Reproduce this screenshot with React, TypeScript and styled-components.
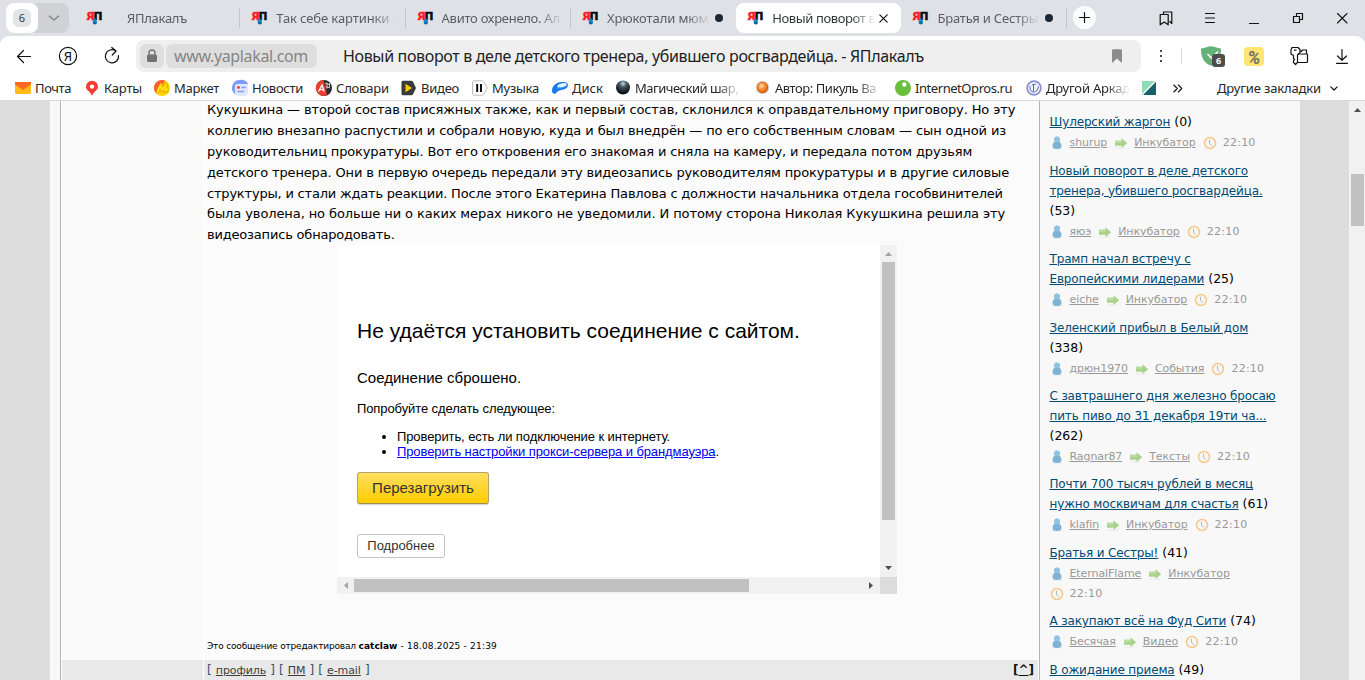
import React from "react";
import styled, { createGlobalStyle, css } from "styled-components";

const UI = `"Noto Sans", "Open Sans", sans-serif`;
const FORUM = `"DejaVu Sans", Verdana, sans-serif`;
const PAGE = `"Liberation Sans", Arial, sans-serif`;

const Global = createGlobalStyle`
  * { box-sizing: border-box; }
  body { margin: 0; background: #dfe1e6; overflow: hidden; }
  svg { display: block; flex: none; overflow: visible; }
`;

const Browser = styled.div`
  width: 1365px;
  height: 680px;
  display: flex;
  flex-direction: column;
  overflow: hidden;
`;

const fade = css`
  mask-image: linear-gradient(to right, #000 calc(100% - 24px), transparent);
`;

/* ---------- tab strip ---------- */

const TabStrip = styled.div`
  flex: none;
  height: 36px;
  display: flex;
  align-items: flex-start;
  padding: 3px 0 0 6px;
  font-family: ${UI};
`;

const TabCounter = styled.div`
  width: 63px;
  height: 30px;
  margin-right: 6px;
  display: flex;
  background: #d0d2d6;
  border-radius: 8px;
`;

const CountBox = styled.div`
  width: 32px;
  height: 30px;
  display: grid;
  place-items: center;
  background: #fff;
  border-radius: 8px;
`;

const CountBadge = styled.span`
  width: 18px;
  height: 18px;
  border-radius: 6px;
  background: #e2e4e8;
  color: #33373d;
  font-size: 11px;
  line-height: 17px;
  text-align: center;
`;

const CountArrow = styled.div`
  flex: 1;
  display: grid;
  place-items: center;
`;

const Tab = styled.div<{ $active?: boolean; $line?: boolean }>`
  flex: none;
  width: 165.3px;
  height: 30px;
  display: flex;
  align-items: center;
  padding-left: 12px;
  border-radius: 8px;
  background: ${(p) => (p.$active ? "#fff" : "transparent")};
  color: ${(p) => (p.$active ? "#33373c" : "#5a5d62")};
  &::after {
    content: "";
    width: 1px;
    height: 20px;
    margin-left: auto;
    background: ${(p) => (p.$line ? "#c4c6ca" : "transparent")};
  }
`;

const TabTitle = styled.span<{ $centered?: boolean; $clip?: number; $track?: number }>`
  margin-left: ${(p) => (p.$centered ? 24 : 8)}px;
  width: ${(p) => p.$clip ?? 119}px;
  overflow: hidden;
  white-space: nowrap;
  font-size: 13px;
  line-height: 20px;
  letter-spacing: ${(p) => p.$track ?? -0.28}px;
  ${fade}
`;

const UnreadDot = styled.span`
  width: 8px;
  height: 8px;
  margin-left: 5px;
  border-radius: 50%;
  background: #1d2733;
`;

const CloseSlot = styled.span`
  margin-left: 4px;
`;

const NewTab = styled.div`
  width: 23px;
  height: 23px;
  margin: 3px 0 0 6px;
  display: grid;
  place-items: center;
  border-radius: 50%;
  background: #fbfcfd;
`;

const WindowButtons = styled.div`
  flex: 1;
  height: 30px;
  display: flex;
  align-items: center;
  justify-content: flex-end;
  gap: 28px;
  padding-right: 15px;
`;

/* ---------- toolbar ---------- */

const Toolbar = styled.div`
  flex: none;
  height: 40px;
  display: flex;
  align-items: center;
  padding: 0 14px;
  background: #fff;
  border-radius: 9px 9px 0 0;
  font-family: ${UI};
`;

const NavButtons = styled.div`
  width: 122px;
  display: flex;
  align-items: center;
  gap: 24px;
`;

const AddressBar = styled.div`
  width: 1005px;
  height: 32px;
  display: flex;
  align-items: center;
  padding: 0 17px 0 4px;
  border-radius: 8px;
  background: #efefef;
`;

const LockBox = styled.div`
  width: 24px;
  height: 24px;
  margin-right: 2px;
  display: grid;
  place-items: center;
  background: #dedede;
  border-radius: 6px;
`;

const Host = styled.div`
  width: 151px;
  height: 24px;
  padding-left: 8px;
  background: #dedede;
  border-radius: 6px;
  color: #858585;
  font-size: 16px;
  line-height: 24px;
  letter-spacing: -0.36px;
`;

const PageTitle = styled.div`
  flex: 1;
  margin-left: 26px;
  color: #222;
  font-size: 16px;
  line-height: 24px;
  letter-spacing: -0.35px;
  white-space: nowrap;
`;

const ToolIcons = styled.div`
  display: flex;
  align-items: center;
  padding-left: 18px;
`;

const Divider = styled.span`
  width: 1px;
  height: 16px;
  margin: 0 19px 0 18px;
  background: #dcdcdc;
`;

const Badge = styled.span`
  position: absolute;
  right: -4px;
  bottom: -1px;
  width: 13px;
  height: 13px;
  border-radius: 3px;
  background: #4d4d4d;
  color: #fff;
  font-size: 9px;
  font-weight: 700;
  line-height: 13px;
  text-align: center;
`;

const ShieldWrap = styled.span`
  position: relative;
`;

const Coupon = styled.span`
  width: 20px;
  height: 19px;
  margin: 0 25px 0 23px;
  border-radius: 4px;
  background: #ffe571;
  color: #74706a;
  font: italic 700 18px/21px Roboto, sans-serif;
  text-align: center;
`;

const DownloadSlot = styled.span`
  margin-left: 25px;
`;

/* ---------- bookmarks ---------- */

const Bookmarks = styled.div`
  flex: none;
  height: 25px;
  display: flex;
  align-items: center;
  padding-left: 15px;
  background: #fff;
  border-bottom: 1px solid #d9d9d9;
  font-family: ${UI};
  font-size: 13px;
  line-height: 20px;
  color: #262626;
`;

const Bookmark = styled.div<{ $w: number }>`
  flex: none;
  width: ${(p) => p.$w}px;
  display: flex;
  align-items: center;
  gap: 4px;
`;

const BookmarkName = styled.span<{ $track: number; $fade?: boolean }>`
  width: ${(p) => (p.$fade ? "106px" : "auto")};
  overflow: hidden;
  white-space: nowrap;
  letter-spacing: ${(p) => p.$track}px;
  ${(p) => p.$fade && fade}
`;

const ShortName = styled(BookmarkName)`
  width: 84px;
`;

const OtherBookmarks = styled.div`
  display: flex;
  align-items: center;
  gap: 9px;
  margin-left: 34px;
  letter-spacing: -0.14px;
`;

/* ---------- page ---------- */

const Viewport = styled.div`
  flex: 1;
  min-height: 0;
  display: flex;
  padding-left: 50px;
  background: #dddddd;
`;

const Gutter = styled.div`
  width: 10px;
  background: #f8f8f8;
`;

const Topic = styled.div`
  width: 980px;
  display: grid;
  grid-template-columns: 141px 834px;
  grid-template-rows: 558px 1fr;
  gap: 1px;
  background: #fff;
  border: solid #b3b3b3;
  border-width: 0 1px;
  padding-left: 1px;
  overflow: hidden;
`;

const AuthorCell = styled.div`
  background: #fafafa;
`;

const PostCell = styled.div`
  display: flex;
  flex-direction: column;
  padding-left: 3px;
  background: #fbfbfb;
  font-family: ${FORUM};
  color: #000;
`;

const PostText = styled.div`
  height: 144.6px;
  margin-top: -0.6px;
  font-size: 13px;
  line-height: 20.8px;
`;

const PostLine = styled.div<{ $track: number }>`
  white-space: nowrap;
  letter-spacing: ${(p) => p.$track}px;
`;

const EditNote = styled.div`
  margin-top: 44px;
  font-size: 9px;
  line-height: 16px;
  letter-spacing: -0.17px;
  white-space: pre;
  b {
    letter-spacing: 0.05px;
  }
`;

const EditDate = styled.span`
  letter-spacing: 0.2px;
`;

const FooterCell = styled.div`
  display: flex;
  justify-content: space-between;
  background: #e9e9e9;
  padding: 0 4px 0 3px;
  font: 12px/21px ${FORUM};
  color: #37526b;
  white-space: pre;
`;

const FooterLinks = styled.span`
  word-spacing: 0.3px;
  a {
    color: #3c3c3c;
    font-size: 11px;
    text-decoration: underline;
    letter-spacing: -0.1px;
  }
`;

const ToTop = styled.b`
  color: #111;
`;

/* ---------- embedded frame ---------- */

const Frame = styled.div`
  width: 560px;
  height: 349px;
  margin-left: 130px;
  display: grid;
  grid-template-columns: 543px 17px;
  grid-template-rows: 332px 17px;
  background: #fff;
  font-family: ${PAGE};
`;

const ErrorPage = styled.div`
  padding: 73px 0 0 20px;
  overflow: hidden;
  font-size: 13px;
  line-height: 15px;
  letter-spacing: -0.1px;
`;

const ErrorTitle = styled.h1`
  margin: 0 0 25px;
  font-size: 21px;
  font-weight: 400;
  line-height: 26px;
  letter-spacing: 0;
`;

const ErrorReason = styled.p`
  margin: 0 0 14px;
  font-size: 15px;
  line-height: 18px;
  letter-spacing: 0;
`;

const ErrorHint = styled.p`
  margin: 0 0 13px;
`;

const Tips = styled.ul`
  margin: 0 0 13px;
  padding-left: 40px;
  a {
    color: #0000ee;
    text-decoration: underline;
  }
`;

const ReloadButton = styled.button`
  display: block;
  width: 132px;
  height: 32px;
  padding: 0;
  border: 1px solid #b5a468;
  border-bottom-color: #9d8c50;
  border-radius: 3px;
  background: linear-gradient(#ffdf60, #ffcc00);
  box-shadow: 0 1px 1px rgba(0, 0, 0, 0.18);
  color: #333;
  font: 15px/30px ${PAGE};
`;

const DetailsButton = styled.button`
  display: block;
  width: 88px;
  height: 24px;
  margin-top: 30px;
  padding: 0;
  border: 1px solid #c4c4c4;
  border-radius: 3px;
  background: #fff;
  color: #333;
  font: 13px/20px ${PAGE};
`;

const Track = styled.div<{ $horizontal?: boolean }>`
  display: flex;
  flex-direction: ${(p) => (p.$horizontal ? "row" : "column")};
  align-items: center;
  background: #f1f1f1;
`;

const Arrow = styled.div<{ $turn: number; $dim?: boolean }>`
  flex: none;
  width: 17px;
  height: 17px;
  display: grid;
  place-items: center;
  transform: rotate(${(p) => p.$turn}deg);
  color: ${(p) => (p.$dim ? "#a3a3a3" : "#505050")};
`;

const Thumb = styled.div<{ $horizontal?: boolean; $size: number; $offset?: number }>`
  flex: none;
  width: ${(p) => (p.$horizontal ? p.$size : 13)}px;
  height: ${(p) => (p.$horizontal ? 13 : p.$size)}px;
  margin-top: ${(p) => p.$offset ?? 0}px;
  background: #c1c1c1;
`;

const Spacer = styled.div`
  flex: 1;
`;

const Corner = styled.div`
  background: #dcdcdc;
`;

/* ---------- sidebar ---------- */

const Sidebar = styled.aside`
  width: 260px;
  padding: 11.4px 0 0 9.5px;
  overflow: hidden;
  background: #f8f8f8;
  font-family: ${FORUM};
`;

const SideItem = styled.div`
  margin-bottom: 7.4px;
`;

const SideTitle = styled.div`
  margin-bottom: 1px;
  font-size: 12px;
  line-height: 20px;
  letter-spacing: -0.15px;
  white-space: nowrap;
  color: #000;
  a {
    color: #004b75;
    text-decoration: underline;
    text-underline-offset: 1px;
  }
`;

const ReplyCount = styled.span`
  font-size: 12.5px;
  letter-spacing: 0;
`;

const SideMeta = styled.div`
  width: 240px;
  display: flex;
  flex-wrap: wrap;
  font-size: 11px;
  line-height: 20px;
  color: #999;
  letter-spacing: -0.08px;
`;

const MetaPart = styled.span`
  display: flex;
  align-items: center;
  gap: 6px;
  margin-right: 7px;
  a {
    text-decoration: underline;
    text-underline-offset: 1px;
  }
`;

const PostedAt = styled(MetaPart)`
  margin-right: 0;
  letter-spacing: 0.25px;
`;

const PageScroll = styled.div`
  width: 16px;
  margin-left: auto;
  display: flex;
  flex-direction: column;
  align-items: center;
  background: #f1f1f1;
`;

/* ---------- icons ---------- */

const Triangle = () => (
  <svg width="7" height="4" viewBox="0 0 7 4">
    <path d="M3.5 0L7 4H0z" fill="currentColor" />
  </svg>
);

const Favicon = () => (
  <svg width="16" height="16" viewBox="0 0 16 16">
    <text x="0.300" y="9.500" fontFamily="Roboto, sans-serif" fontWeight="900" fontSize="11.5" textLength="7" lengthAdjust="spacingAndGlyphs" fill="#ff1a2b" stroke="#ff1a2b" strokeWidth=".4">Я</text>
    <text x="7" y="9.500" fontFamily="Roboto, sans-serif" fontWeight="900" fontSize="11.5" textLength="8" lengthAdjust="spacingAndGlyphs" fill="#0c0c10" stroke="#0c0c10" strokeWidth=".6">П</text>
    <path d="M7.800 7.200C8.600 9.300 10 10.600 10 12.200a2.200 2.200 0 0 1-4.400 0C5.600 10.600 7 9.300 7.800 7.200z" fill="#1284bd" />
    <path d="M6.300 12.600a1.600 1.600 0 0 0 3.200 0z" fill="#0a5f94" />
  </svg>
);

const Line = ({ w, h, d, sw = 1.3 }: { w: number; h: number; d: string; sw?: number }) => (
  <svg width={w} height={h} viewBox={`0 0 ${w} ${h}`} fill="none" stroke="#111" strokeWidth={sw} strokeLinejoin="round" strokeLinecap="round">
    <path d={d} />
  </svg>
);

const UserIcon = () => (
  <svg width="14" height="14" viewBox="0 0 14 14">
    <ellipse cx="7" cy="12.600" rx="5.200" ry="1" fill="#e6eaec" />
    <path d="M4.100 3.400a2.900 2.900 0 0 1 5.800 0q0 1.500-.7 2.300C10.800 6.600 11.500 8 11.500 10c0 2-1.600 3-4.500 3s-4.500-1-4.500-3c0-2 .7-3.400 2.300-4.300q-.7-.8-.7-2.300z" fill="#7fb3d5" />
    <circle cx="7" cy="3.400" r="2.700" fill="#8ec3e3" />
  </svg>
);

const GoIcon = () => (
  <svg width="14" height="14" viewBox="0 0 14 14">
    <path d="M1 12h11" stroke="#e8eae6" />
    <path d="M1 4.700h6.500V2.300L13.200 7.200 7.500 12.100V9.700H1z" fill="#a9d28d" />
    <path d="M1 4.700h6.500v2.500H1z" fill="#b9dca0" />
  </svg>
);

const ClockIcon = () => (
  <svg width="14" height="14" viewBox="0 0 14 14" fill="none">
    <circle cx="7" cy="7" r="5.500" fill="#f6f6f6" stroke="#f8c88a" strokeWidth="1.500" />
    <path d="M6.500 3.800V7.300l2.300 2.200" stroke="#b4b4b4" />
  </svg>
);

const icons: Record<string, React.ReactNode> = {
  mail: (
    <svg width="16" height="16" viewBox="0 0 16 16">
      <path d="M0 4l8 5 8-5v8.500q0 1.500-1.500 1.500h-13Q0 14 0 12.500z" fill="#ffba1a" />
      <path d="M0 2h16v2.500L8 10 0 4.500z" fill="#ff6a1e" />
    </svg>
  ),
  pin: (
    <svg width="16" height="16" viewBox="0 0 16 16">
      <path d="M8 .8a6 6 0 0 1 6 6c0 3.500-4 4.300-6 9-2-4.700-6-5.500-6-9a6 6 0 0 1 6-6z" fill="#f43b2f" />
      <circle cx="8" cy="6.600" r="2.200" fill="#fff" />
    </svg>
  ),
  market: (
    <svg width="16" height="16" viewBox="0 0 16 16">
      <circle cx="8" cy="8" r="8" fill="#ffd400" />
      <path d="M8 0A8 8 0 0 0 .8 11.500L3 13.500 9 4.500 11 .6A8 8 0 0 0 8 0z" fill="#ff5c34" />
      <path d="M3 12.500L7 4.500 8 10.500 12 5 11 11 14 9" fill="none" stroke="#f07a1c" strokeWidth="3.400" strokeLinejoin="round" />
      <path d="M3.200 12.500L7 4.500 8 10.500 12 5 11 11 14 9" fill="none" stroke="#ffe000" strokeWidth="2.300" strokeLinejoin="round" />
    </svg>
  ),
  news: (
    <svg width="16" height="16" viewBox="0 0 16 16">
      <path d="M8 0a8 8 0 0 0-5 14.300L16 3.500A8 8 0 0 0 8 0z" fill="#7f9cf7" />
      <path d="M5.500 4H16v7.500q0 4.500-4.500 4.500H7q-4 0-4-4V6.500Q3 4 5.500 4z" fill="#dfe8ff" />
      <circle cx="6.500" cy="7.500" r="1.400" fill="#f33b33" />
      <path d="M9.500 7.500H14M5.500 11.500H12" stroke="#7f9cf7" strokeWidth="1.500" />
    </svg>
  ),
  dict: (
    <svg width="16" height="16" viewBox="0 0 16 16">
      <circle cx="8" cy="8" r="8" fill="#2c2c30" />
      <path d="M7.500 0A8 8 0 0 0 8 16l3-1.500z" fill="#f03c2d" />
      <path d="M2.500 11.500L6 5l2.200 6.500M3.600 9.700h4" fill="none" stroke="#fff" strokeWidth="1.300" />
      <path d="M9 3.500l4 1M9.500 6.800l4.500 1M11 2.500v6M13.500 3v4" stroke="#ddd" strokeWidth=".9" />
    </svg>
  ),
  video: (
    <svg width="16" height="16" viewBox="0 0 16 16">
      <path d="M2 .8h8.500q1 0 1.500 1L15 8l-3 6.200q-.5 1-1.500 1H2q-1.500 0-1.500-1.500V2.300Q.5.800 2 .8z" fill="#3a3a3c" />
      <path d="M4.500 3.800L11 8l-6.500 4.200z" fill="#ffcc00" />
    </svg>
  ),
  music: (
    <svg width="16" height="16" viewBox="0 0 16 16">
      <path d="M2 .8h8.500q1 0 1.500 1L15.300 8 12 14.200q-.5 1-1.500 1H2q-1.500 0-1.500-1.500V2.300Q.5.800 2 .8z" fill="#fff" stroke="#bdbdbd" />
      <path d="M5.200 4v8M9 4v8" stroke="#111" strokeWidth="2" />
    </svg>
  ),
  disk: (
    <svg width="16" height="16" viewBox="0 0 16 16">
      <path d="M0 10C.5 5.500 5 2 10.500 2c4.300 0 6.200 1.800 5.200 4.200C14.500 9.800 9.500 9.500 6.500 10.800 4.300 11.800 4.500 13.800 2.500 13.800.8 13.800-.2 12 0 10z" fill="#1876ee" />
      <ellipse cx="10" cy="5.300" rx="4.800" ry="1.900" transform="rotate(-12 10 5.300)" fill="#e6f5ff" />
      <path d="M5.200 7c3 1.300 7 .6 9.300-1.300C13.500 8.200 8 8 5 8.700z" fill="#44b4ff" />
    </svg>
  ),
  ball: (
    <svg width="16" height="16" viewBox="0 0 16 16">
      <defs>
        <radialGradient id="ball" cx=".5" cy=".22" r=".7">
          <stop offset="0" stopColor="#c3d5dd" />
          <stop offset=".4" stopColor="#41505c" />
          <stop offset="1" stopColor="#080c14" />
        </radialGradient>
      </defs>
      <circle cx="8" cy="7.500" r="7" fill="url(#ball)" />
    </svg>
  ),
  orange: (
    <svg width="16" height="16" viewBox="0 0 16 16">
      <defs>
        <radialGradient id="orange" cx=".4" cy=".35" r=".65">
          <stop offset="0" stopColor="#ffe2b8" />
          <stop offset=".5" stopColor="#ff9436" />
          <stop offset="1" stopColor="#e35f0a" />
        </radialGradient>
      </defs>
      <circle cx="7.500" cy="7.500" r="6.800" fill="#dcd6d2" />
      <circle cx="7.500" cy="7.500" r="5.700" fill="#c8611c" />
      <circle cx="7.500" cy="7.500" r="5" fill="url(#orange)" />
    </svg>
  ),
  green: (
    <svg width="16" height="16" viewBox="0 0 16 16">
      <circle cx="8" cy="8" r="8" fill="#69bf3b" />
      <circle cx="9.300" cy="4.500" r="2.200" fill="#fff" />
    </svg>
  ),
  anchor: (
    <svg width="16" height="16" viewBox="0 0 16 16" fill="none">
      <circle cx="8" cy="8" r="6.900" fill="#eef0fb" stroke="#8a94cc" strokeWidth="1.700" />
      <path d="M3.800 6c0 4 1.500 6 3.700 6s4.300-1.500 5-5.500M7.500 4.500v7M5.800 5l4-.8" stroke="#5565b5" />
    </svg>
  ),
  teal: (
    <svg width="14" height="14" viewBox="0 0 14 14">
      <path d="M0 0h13L0 13z" fill="#93dbb4" />
      <path d="M14 .8V14H1z" fill="#14606b" />
    </svg>
  ),
};

/* ---------- data ---------- */

const tabs = [
  { title: "Так себе картинки 1", track: -0.1 },
  { title: "Авито охренело. Ал", track: -0.28 },
  { title: "Хрюкотали мюмз", dot: true, track: -0.1 },
  { title: "Новый поворот в", active: true, track: -0.38 },
  { title: "Братья и Сестры!", dot: true, track: -0.2 },
];

const bookmarks: [string, string, number, number, boolean?][] = [
  ["mail", "Почта", 69, -0.4],
  ["pin", "Карты", 70, -0.2],
  ["market", "Маркет", 78, -0.27],
  ["news", "Новости", 84, -0.27],
  ["dict", "Словари", 85, -0.18],
  ["video", "Видео", 71, -0.26],
  ["music", "Музыка", 80, -0.25],
  ["disk", "Диск", 63, 0],
  ["ball", "Магический шар,", 140, -0.5, true],
  ["orange", "Автор: Пикуль Ва", 140, -0.45, true],
  ["green", "InternetOpros.ru", 131, -0.44],
];

const article: [string, number][] = [
  ["Кукушкина — второй состав присяжных также, как и первый состав, склонился к оправдательному приговору. Но эту", -0.124],
  ["коллегию внезапно распустили и собрали новую, куда и был внедрён — по его собственным словам — сын одной из", -0.093],
  ["руководительниц прокуратуры. Вот его откровения его знакомая и сняла на камеру, и передала потом друзьям", -0.152],
  ["детского тренера. Они в первую очередь передали эту видеозапись руководителям прокуратуры и в другие силовые", -0.152],
  ["структуры, и стали ждать реакции. После этого Екатерина Павлова с должности начальника отдела гособвинителей", -0.198],
  ["была уволена, но больше ни о каких мерах никого не уведомили. И потому сторона Николая Кукушкина решила эту", -0.095],
  ["видеозапись обнародовать.", -0.19],
];

const topics: { lines: string[]; count: number; below?: boolean; user: string; forum: string }[] = [
  { lines: ["Шулерский жаргон"], count: 0, user: "shurup", forum: "Инкубатор" },
  { lines: ["Новый поворот в деле детского", "тренера, убившего росгвардейца."], count: 53, below: true, user: "яюэ", forum: "Инкубатор" },
  { lines: ["Трамп начал встречу с", "Европейскими лидерами"], count: 25, user: "eiche", forum: "Инкубатор" },
  { lines: ["Зеленский прибыл в Белый дом"], count: 338, below: true, user: "дрюн1970", forum: "События" },
  { lines: ["С завтрашнего дня железно бросаю", "пить пиво до 31 декабря 19ти ча..."], count: 262, below: true, user: "Ragnar87", forum: "Тексты" },
  { lines: ["Почти 700 тысяч рублей в месяц", "нужно москвичам для счастья"], count: 61, user: "klafin", forum: "Инкубатор" },
  { lines: ["Братья и Сестры!"], count: 41, user: "EternalFlame", forum: "Инкубатор" },
  { lines: ["А закупают всё на Фуд Сити"], count: 74, user: "Бесячая", forum: "Видео" },
];

export default function App() {
  return (
    <Browser>
      <Global />
      <TabStrip>
        <TabCounter>
          <CountBox><CountBadge>6</CountBadge></CountBox>
          <CountArrow>
            <svg width="12" height="6" viewBox="0 0 12 6" fill="none" stroke="#84878c" strokeWidth="1.500"><path d="M1 .7l5 4.300 5-4.300" /></svg>
          </CountArrow>
        </TabCounter>
        <Tab $line>
          <Favicon />
          <TabTitle $centered $clip={100} $track={-0.28}>ЯПлакалъ</TabTitle>
        </Tab>
        {tabs.map((t, i) => (
          <Tab key={t.title} $active={t.active} $line={i !== 2 && !t.active}>
            <Favicon />
            <TabTitle $clip={t.dot || t.active ? 103 : 121} $track={t.track}>{t.title}</TabTitle>
            {t.dot && <UnreadDot />}
            {t.active && <CloseSlot><Line w={9} h={9} sw={1.2} d="M.8.8l7.400 7.400M8.200.8L.8 8.200" /></CloseSlot>}
          </Tab>
        ))}
        <NewTab><Line w={11} h={11} d="M5.500.5v10M.5 5.500h10" sw={1.2} /></NewTab>
        <WindowButtons>
          <Line w={16} h={15} d="M5.500 3V1h8.300v11.500l-2-2M2.200 3.500h8v10.300L6.200 11l-4 2.800z" sw={1.2} />
          <Line w={16} h={12} d="M3.500 1.500h9M3.500 6h9M3.500 10.500h9" sw={1.2} />
          <Line w={16} h={11} d="M3.500 10.500h9" sw={1.2} />
          <Line w={16} h={12} d="M6.500 3.500V1.500h6v6h-2M3.500 4.500h6v6h-6z" sw={1.2} />
          <Line w={16} h={12} d="M3.500 1.500l9.500 9.500M13 1.500l-9.500 9.500" sw={1.1} />
        </WindowButtons>
      </TabStrip>

      <Toolbar>
        <NavButtons>
          <Line w={20} h={16} d="M16.500 8.500H3.500M9.500 2.500l-6 6 6 6" sw={1.2} />
          <svg width="20" height="20" viewBox="0 0 20 20">
            <circle cx="10" cy="10" r="8.600" fill="none" stroke="#111" strokeWidth="1.200" />
            <text x="10" y="14.600" textAnchor="middle" fontFamily="Roboto, sans-serif" fontSize="13" fill="#111">Я</text>
          </svg>
          <Line w={20} h={20} d="M16.500 9.500a6.600 6.600 0 1 1-2.800-4.600M9.800 1.500l4.300 3.500-3.800 4" sw={1.2} />
        </NavButtons>
        <AddressBar>
          <LockBox>
            <svg width="12" height="14" viewBox="0 0 12 14">
              <path d="M3 6.500V4a3 3 0 0 1 6 0v2.500" fill="none" stroke="#737373" strokeWidth="1.400" />
              <rect x="1" y="5.500" width="10" height="7.500" rx="1.500" fill="#737373" />
            </svg>
          </LockBox>
          <Host>www.yaplakal.com</Host>
          <PageTitle>Новый поворот в деле детского тренера, убившего росгвардейца. - ЯПлакалъ</PageTitle>
          <svg width="14" height="14" viewBox="0 0 14 14"><path d="M2 1.500Q2 .2 3.300.2h7.400Q12 .2 12 1.500V14l-5-4.500L2 14z" fill="#8c8c8c" /></svg>
        </AddressBar>
        <ToolIcons>
          <svg width="4" height="14" viewBox="0 0 4 14" fill="#222"><circle cx="2" cy="2" r="1.100" /><circle cx="2" cy="7" r="1.100" /><circle cx="2" cy="12" r="1.100" /></svg>
          <Divider />
          <ShieldWrap>
            <svg width="20" height="20" viewBox="0 0 20 20">
              <path d="M0 2.500C4 2.500 7 .3 10 .3s6 2.200 10 2.200C20 11 17.500 17 10 19.700 2.500 17 0 11 0 2.500z" fill="#63b277" />
              <path d="M6.500 8l4 4L17 5.500" fill="none" stroke="#fff" strokeWidth="1.600" />
            </svg>
            <Badge>6</Badge>
          </ShieldWrap>
          <Coupon>%</Coupon>
          <svg width="20" height="20" viewBox="0 0 20 20" fill="none" stroke="#111" strokeWidth="1.200" strokeLinejoin="round">
            <path d="M3 1.500h6l2 2v3L8.500 9v7.500L6.500 18.500l-2-2v-2l1-1-1-1V9.500L2 8V4z" />
            <path d="M11.200 5.500h1L13.500 4h4v3.500M9 8h8.800q.7 0 .7.700v7q0 .8-.8.800H9M5 4.200h2.500" />
          </svg>
          <DownloadSlot><Line w={16} h={16} d="M8 1.500v10.500M3.500 8L8 12.300 12.500 8M2.500 15.300h11" sw={1.2} /></DownloadSlot>
        </ToolIcons>
      </Toolbar>

      <Bookmarks>
        {bookmarks.map(([icon, name, w, track, isLong]) => (
          <Bookmark key={icon} $w={w}>
            {icons[icon]}
            <BookmarkName $track={track} $fade={isLong}>{name}</BookmarkName>
          </Bookmark>
        ))}
        <Bookmark $w={116}>
          {icons.anchor}
          <ShortName $track={-0.2} $fade>Другой Аркад</ShortName>
        </Bookmark>
        <Bookmark $w={31}>{icons.teal}</Bookmark>
        <Line w={10} h={9} d="M.8 1l3.500 3.500L.8 8M5.300 1l3.500 3.500L5.300 8" sw={1.1} />
        <OtherBookmarks>
          Другие закладки
          <Line w={8} h={5} d="M.8.8L4 4 7.200.8" sw={1.2} />
        </OtherBookmarks>
      </Bookmarks>

      <Viewport>
        <Gutter />
        <Topic>
          <AuthorCell />
          <PostCell>
            <PostText>
              {article.map(([line, track]) => <PostLine key={line} $track={track}>{line}</PostLine>)}
            </PostText>
            <Frame>
              <ErrorPage>
                <ErrorTitle>Не удаётся установить соединение с сайтом.</ErrorTitle>
                <ErrorReason>Соединение сброшено.</ErrorReason>
                <ErrorHint>Попробуйте сделать следующее:</ErrorHint>
                <Tips>
                  <li>Проверить, есть ли подключение к интернету.</li>
                  <li><a>Проверить настройки прокси-сервера и брандмауэра</a>.</li>
                </Tips>
                <ReloadButton>Перезагрузить</ReloadButton>
                <DetailsButton>Подробнее</DetailsButton>
              </ErrorPage>
              <Track>
                <Arrow $turn={0} $dim><Triangle /></Arrow>
                <Thumb $size={258} />
                <Spacer />
                <Arrow $turn={180}><Triangle /></Arrow>
              </Track>
              <Track $horizontal>
                <Arrow $turn={-90} $dim><Triangle /></Arrow>
                <Thumb $horizontal $size={395} />
                <Spacer />
                <Arrow $turn={90}><Triangle /></Arrow>
              </Track>
              <Corner />
            </Frame>
            <EditNote>
              {"Это сообщение отредактировал "}<b>catclaw</b><EditDate>{" - 18.08.2025 - 21:39"}</EditDate>
            </EditNote>
          </PostCell>
          <FooterCell />
          <FooterCell>
            <FooterLinks>[ <a>профиль</a> ] [ <a>ПМ</a> ] [ <a>e-mail</a> ]</FooterLinks>
            <ToTop>[<u>^</u>]</ToTop>
          </FooterCell>
        </Topic>
        <Sidebar>
          {topics.map((t) => (
            <SideItem key={t.lines[0]}>
              <SideTitle>
                {t.lines.map((l, i) => (
                  <React.Fragment key={l}>{i > 0 && <br />}<a>{l}</a></React.Fragment>
                ))}
                {t.below && <br />}
                <ReplyCount>{t.below ? "" : " "}({t.count})</ReplyCount>
              </SideTitle>
              <SideMeta>
                <MetaPart><UserIcon /><a>{t.user}</a></MetaPart>
                <MetaPart><GoIcon /><a>{t.forum}</a></MetaPart>
                <PostedAt><ClockIcon />22:10</PostedAt>
              </SideMeta>
            </SideItem>
          ))}
          <SideTitle><a>В ожидание приема</a><ReplyCount> (49)</ReplyCount></SideTitle>
        </Sidebar>
        <PageScroll>
          <Arrow $turn={0}><Triangle /></Arrow>
          <Thumb $size={52} $offset={56} />
        </PageScroll>
      </Viewport>
    </Browser>
  );
}
